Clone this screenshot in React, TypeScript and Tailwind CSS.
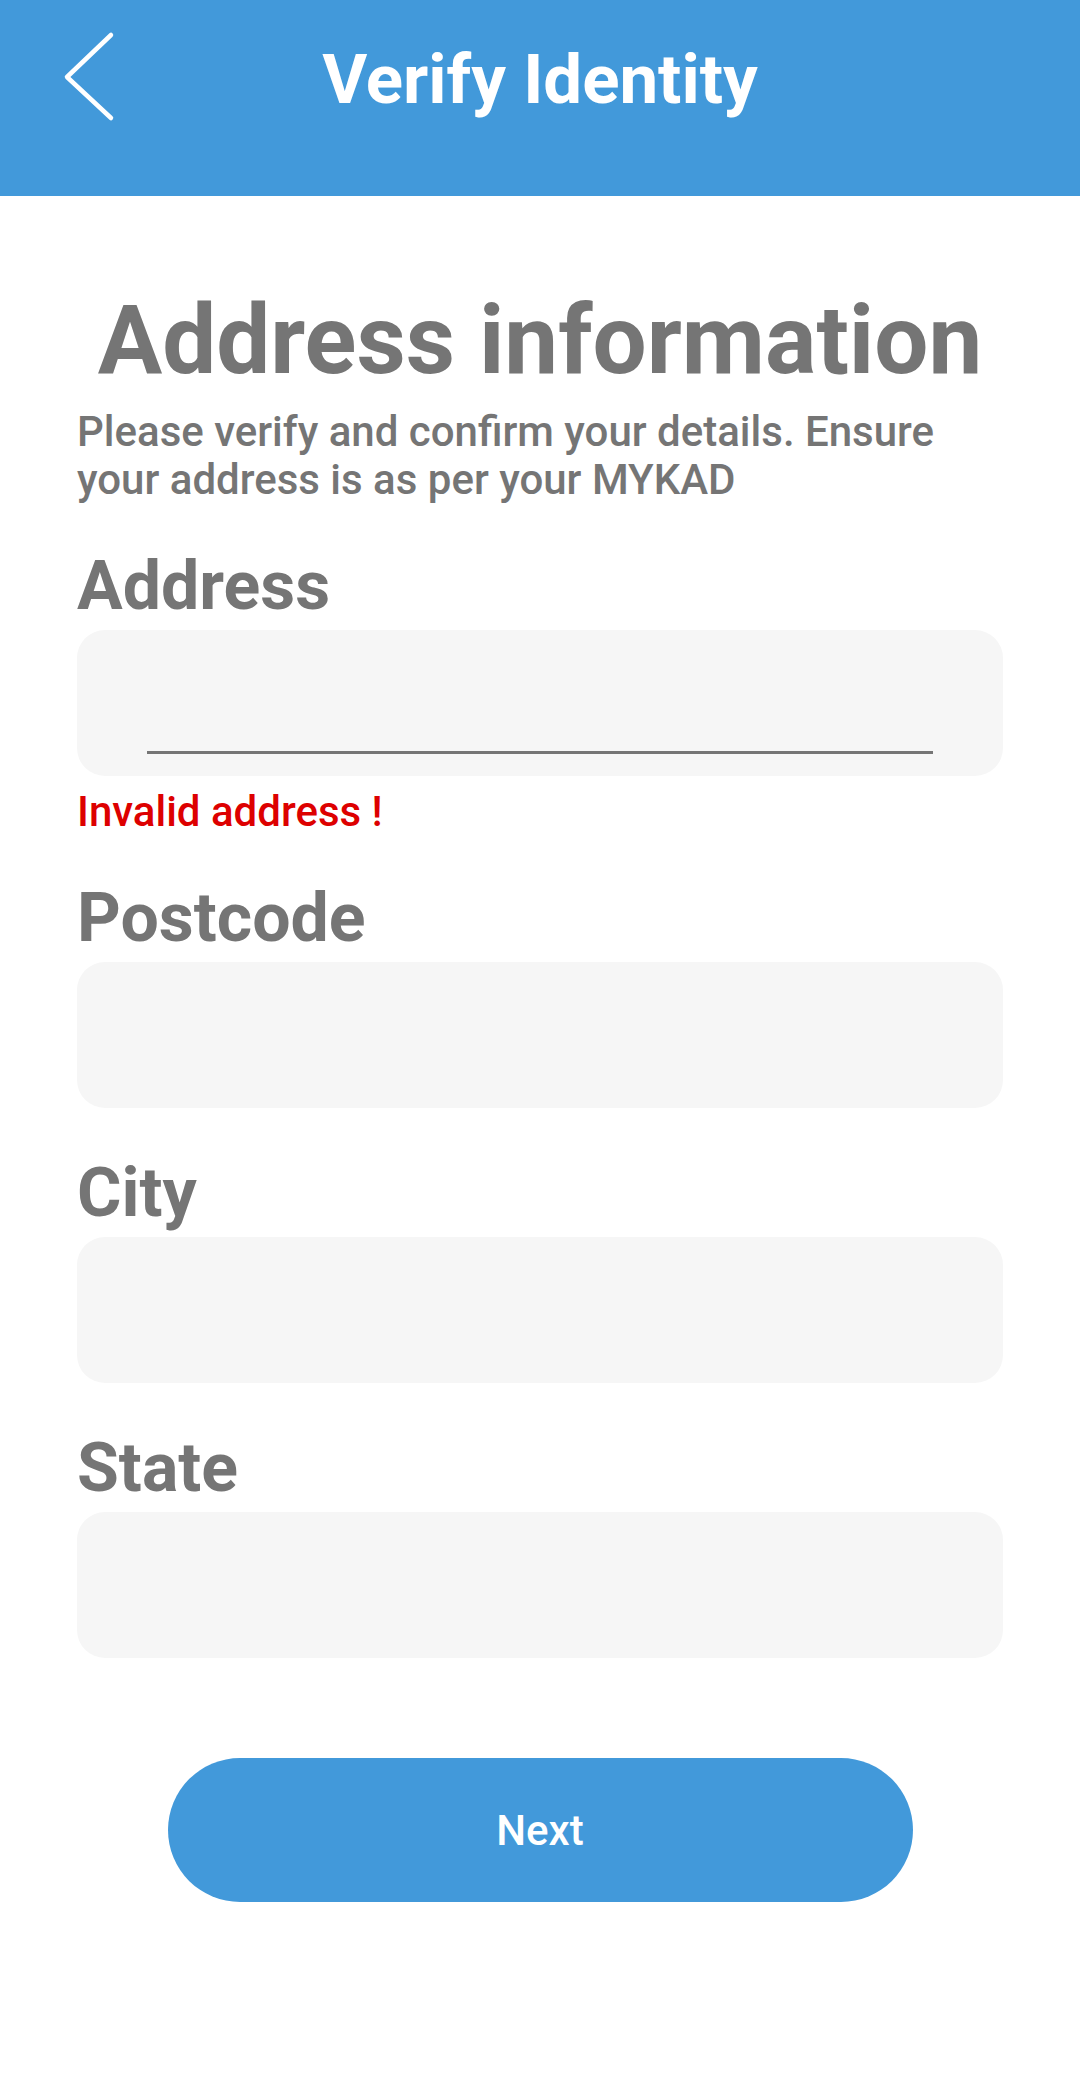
import { useState } from "react";

const fields = ["Address", "Postcode", "City", "State"];

export default function App() {
  const [values, setValues] = useState<Record<string, string>>({});

  return (
    <div className="min-h-[2095px] w-[1080px] bg-white font-['Roboto','Liberation_Sans',sans-serif]">
      <header className="h-[196px] bg-[#4299da]">
        <div className="grid h-[160px] grid-cols-[140px_1fr_140px] items-center">
          <button type="button" className="flex h-[100px] items-center pl-[60px]">
            <svg width="60" height="100" viewBox="0 0 60 100" fill="none">
              <path
                d="M51 5L7 47L51 88"
                stroke="white"
                strokeWidth="4.5"
                strokeLinecap="round"
                strokeLinejoin="round"
              />
            </svg>
          </button>
          <h1 className="text-center text-[69px] font-bold leading-[70px] text-white">
            Verify Identity
          </h1>
          <div />
        </div>
      </header>

      <main className="px-[77px] pt-[96px]">
        <h2 className="text-center text-[96px] font-bold leading-[96px] text-[#757575]">
          Address information
        </h2>
        <p className="mr-[40px] mt-[20px] text-[42px] font-medium leading-[48px] text-[#757575]">
          Please verify and confirm your details. Ensure your address is as per your MYKAD
        </p>

        {fields.map((name, i) => (
          <div key={name} className={i === 0 ? "mt-[48px]" : "mt-[51px]"}>
            <label className="block text-[68px] font-bold leading-[68px] text-[#757575]">
              {name}
            </label>
            <div className="mt-[10px] flex h-[146px] items-end rounded-[28px] bg-[#f6f6f6] px-[70px] pb-[22px]">
              {i === 0 ? (
                <input
                  value={values[name] ?? ""}
                  onChange={(e) => setValues({ ...values, [name]: e.target.value })}
                  className="h-[60px] w-full border-b-[3px] border-[#757575] bg-transparent text-[40px] text-[#444] outline-none"
                />
              ) : (
                <input
                  value={values[name] ?? ""}
                  onChange={(e) => setValues({ ...values, [name]: e.target.value })}
                  className="h-[60px] w-full bg-transparent text-[40px] text-[#444] outline-none"
                />
              )}
            </div>
            {i === 0 && (
              <p className="mt-[15px] text-[42px] font-medium leading-[42px] text-[#dd0000]">
                Invalid address !
              </p>
            )}
          </div>
        ))}

        <div className="mt-[100px] flex justify-center">
          <button
            type="button"
            className="h-[144px] w-[745px] rounded-full bg-[#4299da] text-[42px] font-medium text-white"
          >
            Next
          </button>
        </div>
      </main>
    </div>
  );
}
